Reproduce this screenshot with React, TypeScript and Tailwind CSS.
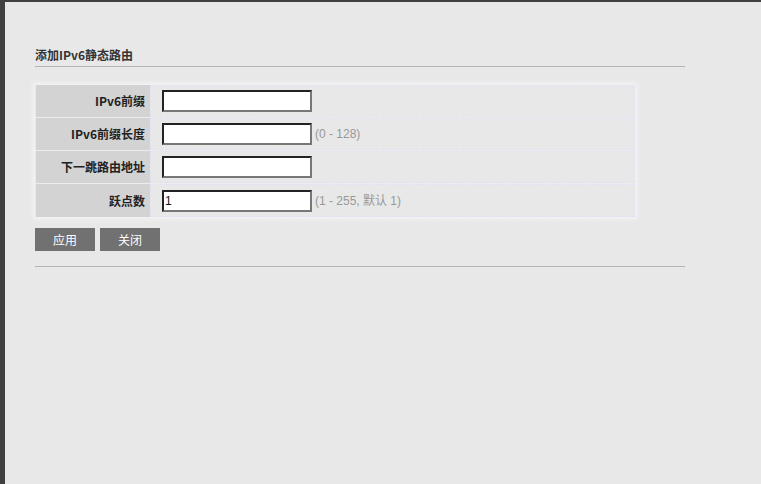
const font = "font-['Microsoft_YaHei','Noto_Sans_CJK_SC',sans-serif]";

const rows = [
  { label: "IPv6前缀", value: "", hint: "" },
  { label: "IPv6前缀长度", value: "", hint: "(0 - 128)" },
  { label: "下一跳路由地址", value: "", hint: "" },
  { label: "跃点数", value: "1", hint: "(1 - 255, 默认 1)" }
];

export default function App() {
  return (
    <div className="w-[761px] h-[484px] overflow-hidden bg-[#404040] pt-[2px] pl-[5px]">
      <div className={`h-full bg-[#e8e8e8] pl-[30px] pt-[45px] ${font}`}>
        <div className="w-[650px] h-[20px] border-b border-[#b4b4b4] text-[12px] leading-[16px] font-bold text-[#333]">
          添加IPv6静态路由
        </div>

        <div className="mt-[18px] w-[600px] shadow-[0_0_5px_2px_#f4f4f4]">
          {rows.map((row, i) => (
            <div key={row.label} className={`flex h-[33px] ${i < rows.length - 1 ? "border-b border-[#ececec]" : ""}`}>
              <div className="w-[114px] ml-[1px] bg-[#d3d3d3] flex items-center justify-end pr-[5px] text-[12px] font-bold text-[#222]">
                {row.label}
              </div>
              <div className="flex-1 flex items-center pl-[11px] border border-dashed border-[#e2e2f6]">
                <input
                  defaultValue={row.value}
                  className="w-[150px] h-[22px] bg-white border-2 border-t-[#222] border-l-[#222] border-b-[#777] border-r-[#777] px-[1px] text-[12px] text-[#111] font-['Liberation_Sans',Arial,sans-serif] outline-none"
                />
                {row.hint ? (
                  <span className="ml-[3px] text-[12px] text-[#999] font-['Liberation_Sans','Noto_Sans_CJK_SC',sans-serif]">
                    {row.hint}
                  </span>
                ) : null}
              </div>
            </div>
          ))}
        </div>

        <div className="mt-[11px] flex gap-[5px]">
          <button className="w-[60px] h-[23px] bg-[#717171] text-white text-[12px]">应用</button>
          <button className="w-[60px] h-[23px] bg-[#717171] text-white text-[12px]">关闭</button>
        </div>

        <div className="w-[650px] mt-[15px] border-t border-[#b4b4b4]" />
      </div>
    </div>
  );
}
